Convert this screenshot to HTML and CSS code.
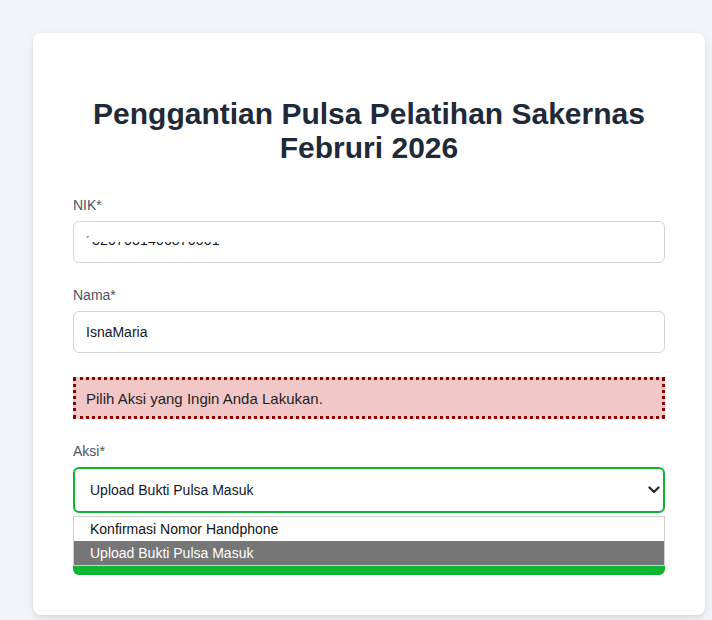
FILE: index.html
```html
<!DOCTYPE html>
<html lang="id">
<head>
<meta charset="utf-8">
<title>Penggantian Pulsa Pelatihan Sakernas Februri 2026</title>
<link rel="stylesheet" href="styles.css">
</head>
<body>
<main class="card">
  <h1 class="title">Penggantian Pulsa Pelatihan Sakernas Februri 2026</h1>
  <div class="field">
    <label class="label">NIK*</label>
    <div class="input nik">
      <span class="tick">´</span>
      <span class="mask"><span class="mask-text">3207031406870001</span></span>
    </div>
  </div>
  <div class="field">
    <label class="label">Nama*</label>
    <div class="input">IsnaMaria</div>
  </div>
  <div class="alert">Pilih Aksi yang Ingin Anda Lakukan.</div>
  <div class="field">
    <label class="label">Aksi*</label>
    <div class="select">
      <span>Upload Bukti Pulsa Masuk</span>
      <svg class="chev" width="12" height="8" viewBox="0 0 12 8"><path d="M1.5 1.5 L6 6 L10.5 1.5" fill="none" stroke="#1f2937" stroke-width="2.2" stroke-linecap="round" stroke-linejoin="round"/></svg>
    </div>
  </div>
  <div class="submit-wrap">
    <button class="submit">Kirim</button>
    <ul class="dropdown">
      <li class="opt">Konfirmasi Nomor Handphone</li>
      <li class="opt selected">Upload Bukti Pulsa Masuk</li>
    </ul>
  </div>
</main>
</body>
</html>
```
FILE: styles.css
```css
* { box-sizing: border-box; }
html, body { margin: 0; padding: 0; }
body {
  background: #f3f4f6;
  font-family: "Liberation Sans", Arial, sans-serif;
  color: #1f2937;
  padding: 33px 7px 6px 33px;
}
.card {
  background: #ffffff;
  border-radius: 8px;
  box-shadow: 0 4px 10px rgba(0,0,0,0.08), 0 1px 3px rgba(0,0,0,0.06);
  padding: 40px;
  width: 672px;
}
.title {
  margin: 24px 0 28px;
  font-size: 30px;
  line-height: 34px;
  font-weight: 700;
  text-align: center;
  color: #1f2937;
}
.field { margin-bottom: 20px; }
.label {
  display: block;
  font-size: 14px;
  line-height: 20px;
  color: #4b5563;
  padding-top: 2px;
  margin-bottom: 6px;
}
.input {
  height: 42px;
  border: 1px solid #d1d5db;
  border-radius: 6px;
  padding: 0 12px;
  display: flex;
  align-items: center;
  font-size: 14px;
  color: #111827;
}
.nik { align-items: flex-start; padding-top: 16px; }
.tick { font-size: 12px; line-height: 8px; color: #6b4b2b; width: 6px; }
.mask {
  display: block;
  height: 4px;
  overflow: hidden;
  margin-top: 4px;
}
.mask-text {
  display: block;
  font-size: 14px;
  line-height: 16px;
  margin-top: -10px;
  letter-spacing: 0.2px;
}
.alert {
  margin: 24px 0 20px;
  height: 42px;
  background: #f2c7c7;
  border: 3px dotted #8b0000;
  padding: 0 10px;
  display: flex;
  align-items: center;
  font-size: 15px;
  color: #1f1f1f;
}
.select {
  height: 46px;
  border: 2px solid #0cb533;
  border-radius: 6px;
  padding: 0 3px 0 15px;
  display: flex;
  align-items: center;
  justify-content: space-between;
  font-size: 14px;
  color: #111827;
}
.chev { margin-right: 0; }
.submit-wrap { position: relative; }
.submit {
  display: block;
  width: 100%;
  height: 42px;
  border: none;
  border-radius: 6px;
  background: #0cb533;
  color: #fff;
  font-family: inherit;
  font-size: 15px;
  font-weight: 700;
}
.dropdown {
  position: absolute;
  left: 0;
  right: 0;
  top: -17px;
  margin: 0;
  padding: 0;
  list-style: none;
  background: #fff;
  border: 1px solid #cfcfcf;
}
.opt {
  height: 24px;
  line-height: 24px;
  padding: 0 16px;
  font-size: 14px;
  color: #111;
}
.opt.selected { background: #767676; color: #fff; }
```
